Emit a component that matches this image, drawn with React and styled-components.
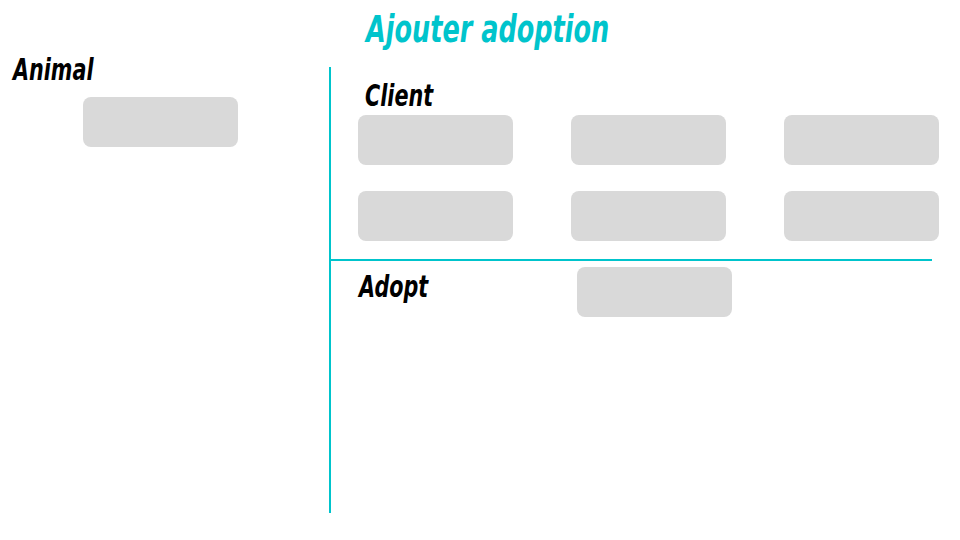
import React from "react";
import styled, { createGlobalStyle } from "styled-components";

const Global = createGlobalStyle`
  html, body { margin: 0; padding: 0; background: #ffffff; }
  body { font-family: "DejaVu Sans", sans-serif; }
`;

const CYAN = "#00c4cc";

const Page = styled.div`
  width: 960px;
  height: 540px;
  background: #ffffff;
  overflow: hidden;
  display: flex;
  flex-direction: column;
`;

const Header = styled.header`
  height: 55px;
  box-sizing: border-box;
  padding: 11px 0 0 366px;
`;

const Title = styled.h1`
  display: inline-block;
  margin: 0;
  font-family: "DejaVu Sans", sans-serif;
  font-weight: 700;
  font-style: italic;
  font-size: 37px;
  line-height: 1;
  color: ${CYAN};
  white-space: nowrap;
  transform: scaleX(0.69);
  transform-origin: left top;
`;

const Main = styled.main`
  display: flex;
  align-items: flex-start;
  flex: 1;
`;

const LeftColumn = styled.section`
  width: 329px;
  box-sizing: border-box;
  padding-left: 13px;
  display: flex;
  flex-direction: column;
  align-items: flex-start;
`;

const Label = styled.h2`
  display: inline-block;
  margin: 0;
  font-family: "DejaVu Sans", sans-serif;
  font-weight: 700;
  font-style: italic;
  font-size: 30px;
  line-height: 1;
  color: #000000;
  white-space: nowrap;
  transform: scaleX(0.69);
  transform-origin: left top;
`;

const Field = styled.div`
  width: 155px;
  height: 50px;
  border-radius: 8px;
  background: #d9d9d9;
  margin-top: ${(p) => p.$top || 0}px;
  margin-left: ${(p) => p.$left || 0}px;
  flex-shrink: 0;
`;

const VerticalRule = styled.div`
  width: 2px;
  height: 446px;
  margin-top: 12px;
  background: ${CYAN};
  flex-shrink: 0;
`;

const RightColumn = styled.section`
  flex: 1;
  display: flex;
  flex-direction: column;
`;

const ClientSection = styled.div`
  padding: 26px 0 0 34px;
  display: flex;
  flex-direction: column;
  align-items: flex-start;
`;

const FieldGrid = styled.div`
  margin: 4px 0 0 -7px;
  width: 581px;
  display: grid;
  grid-template-columns: repeat(3, 155px);
  justify-content: space-between;
  row-gap: 26px;
`;

const HorizontalRule = styled.div`
  margin-top: 18px;
  width: 601px;
  height: 2px;
  background: ${CYAN};
`;

const AdoptRow = styled.div`
  display: flex;
  align-items: flex-start;
  padding: 6px 0 0 28px;
`;

const AdoptLabelSlot = styled.div`
  width: 218px;
  margin-top: 5px;
  flex-shrink: 0;
`;

export default function App() {
  return (
    <Page>
      <Global />
      <Header>
        <Title>Ajouter adoption</Title>
      </Header>
      <Main>
        <LeftColumn>
          <Label>Animal</Label>
          <Field $top={12} $left={70} />
        </LeftColumn>
        <VerticalRule />
        <RightColumn>
          <ClientSection>
            <Label>Client</Label>
            <FieldGrid>
              <Field />
              <Field />
              <Field />
              <Field />
              <Field />
              <Field />
            </FieldGrid>
          </ClientSection>
          <HorizontalRule />
          <AdoptRow>
            <AdoptLabelSlot>
              <Label>Adopt</Label>
            </AdoptLabelSlot>
            <Field />
          </AdoptRow>
        </RightColumn>
      </Main>
    </Page>
  );
}
